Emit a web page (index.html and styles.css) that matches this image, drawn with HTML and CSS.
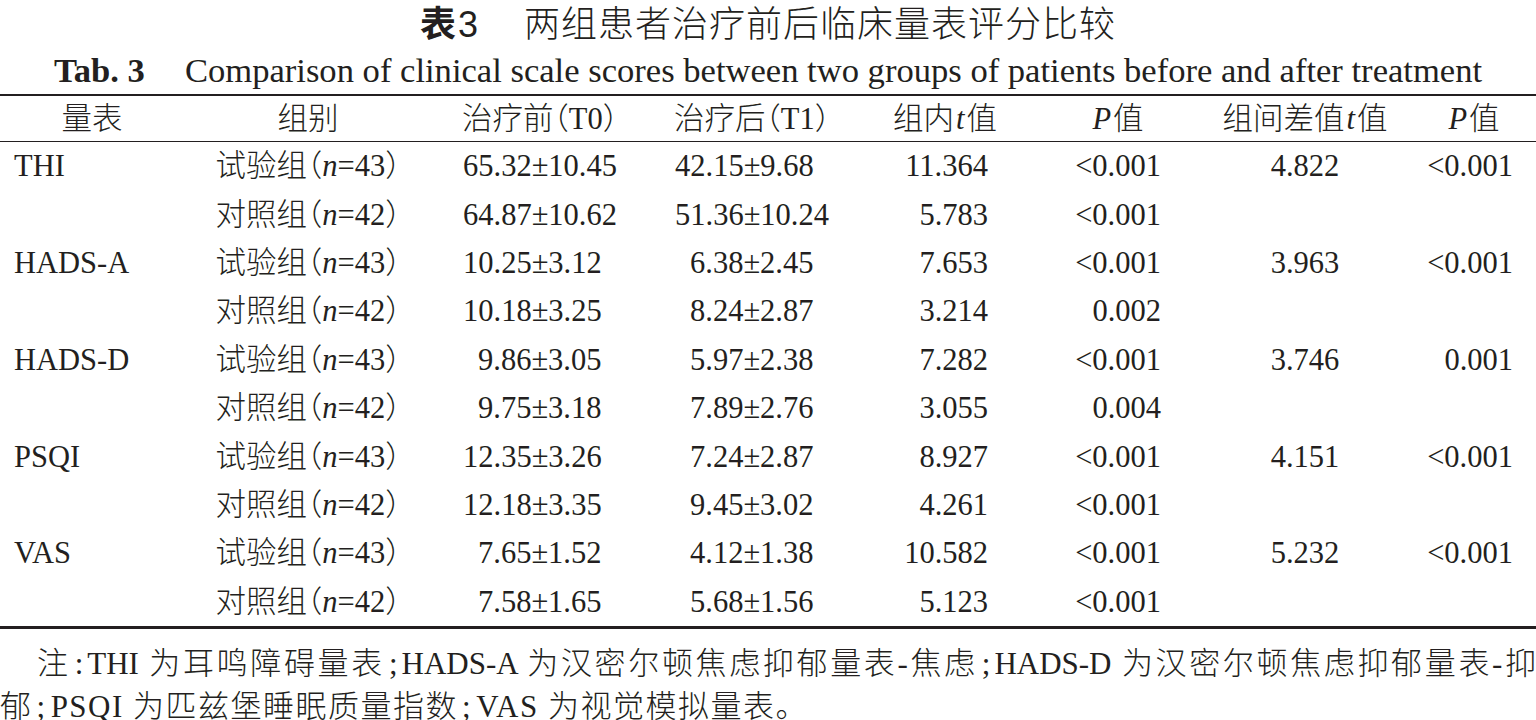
FILE: index.html
```html
<!DOCTYPE html>
<html lang="zh-CN">
<head>
<meta charset="utf-8">
<title>表3 两组患者治疗前后临床量表评分比较</title>
<link rel="stylesheet" href="styles.css">
</head>
<body>
<div class="page">
  <h1 class="cn-title"><span class="tno"><span class="tno-zh">表</span><span class="tno-num">3</span></span><span class="cn-text">两组患者治疗前后临床量表评分比较</span></h1>
  <h2 class="en-title"><b class="en-no">Tab. 3</b><span class="en-text">Comparison of clinical scale scores between two groups of patients before and after treatment</span></h2>
  <table class="data">
    <colgroup>
      <col class="w1"><col class="w2"><col class="w3"><col class="w4"><col class="w5"><col class="w6"><col class="w7"><col class="w8">
    </colgroup>
    <thead>
      <tr>
        <th>量表</th>
        <th>组别</th>
        <th>治疗前<span class="lp">（</span>T0<span class="rp">）</span></th>
        <th>治疗后<span class="lp">（</span>T1<span class="rp">）</span></th>
        <th>组内<i class="it">t</i>值</th>
        <th><i class="it">P</i>值</th>
        <th>组间差值<i class="it">t</i>值</th>
        <th><i class="it">P</i>值</th>
      </tr>
    </thead>
    <tbody>
      <tr>
        <td class="scale">THI</td>
        <td class="grp">试验组<span class="lp">（</span><i>n</i>=43<span class="rp">）</span></td>
        <td class="t0">65.32±10.45</td>
        <td class="t1">42.15±9.68</td>
        <td class="tin">11.364</td>
        <td class="p1">&lt;0.001</td>
        <td class="tb">4.822</td>
        <td class="p2">&lt;0.001</td>
      </tr>
      <tr>
        <td class="scale"></td>
        <td class="grp">对照组<span class="lp">（</span><i>n</i>=42<span class="rp">）</span></td>
        <td class="t0">64.87±10.62</td>
        <td class="t1">51.36±10.24</td>
        <td class="tin">5.783</td>
        <td class="p1">&lt;0.001</td>
        <td class="tb"></td>
        <td class="p2"></td>
      </tr>
      <tr>
        <td class="scale">HADS-A</td>
        <td class="grp">试验组<span class="lp">（</span><i>n</i>=43<span class="rp">）</span></td>
        <td class="t0">10.25±3.12</td>
        <td class="t1 d1">6.38±2.45</td>
        <td class="tin">7.653</td>
        <td class="p1">&lt;0.001</td>
        <td class="tb">3.963</td>
        <td class="p2">&lt;0.001</td>
      </tr>
      <tr>
        <td class="scale"></td>
        <td class="grp">对照组<span class="lp">（</span><i>n</i>=42<span class="rp">）</span></td>
        <td class="t0">10.18±3.25</td>
        <td class="t1 d1">8.24±2.87</td>
        <td class="tin">3.214</td>
        <td class="p1">0.002</td>
        <td class="tb"></td>
        <td class="p2"></td>
      </tr>
      <tr>
        <td class="scale">HADS-D</td>
        <td class="grp">试验组<span class="lp">（</span><i>n</i>=43<span class="rp">）</span></td>
        <td class="t0 d1">9.86±3.05</td>
        <td class="t1 d1">5.97±2.38</td>
        <td class="tin">7.282</td>
        <td class="p1">&lt;0.001</td>
        <td class="tb">3.746</td>
        <td class="p2">0.001</td>
      </tr>
      <tr>
        <td class="scale"></td>
        <td class="grp">对照组<span class="lp">（</span><i>n</i>=42<span class="rp">）</span></td>
        <td class="t0 d1">9.75±3.18</td>
        <td class="t1 d1">7.89±2.76</td>
        <td class="tin">3.055</td>
        <td class="p1">0.004</td>
        <td class="tb"></td>
        <td class="p2"></td>
      </tr>
      <tr>
        <td class="scale">PSQI</td>
        <td class="grp">试验组<span class="lp">（</span><i>n</i>=43<span class="rp">）</span></td>
        <td class="t0">12.35±3.26</td>
        <td class="t1 d1">7.24±2.87</td>
        <td class="tin">8.927</td>
        <td class="p1">&lt;0.001</td>
        <td class="tb">4.151</td>
        <td class="p2">&lt;0.001</td>
      </tr>
      <tr>
        <td class="scale"></td>
        <td class="grp">对照组<span class="lp">（</span><i>n</i>=42<span class="rp">）</span></td>
        <td class="t0">12.18±3.35</td>
        <td class="t1 d1">9.45±3.02</td>
        <td class="tin">4.261</td>
        <td class="p1">&lt;0.001</td>
        <td class="tb"></td>
        <td class="p2"></td>
      </tr>
      <tr>
        <td class="scale">VAS</td>
        <td class="grp">试验组<span class="lp">（</span><i>n</i>=43<span class="rp">）</span></td>
        <td class="t0 d1">7.65±1.52</td>
        <td class="t1 d1">4.12±1.38</td>
        <td class="tin">10.582</td>
        <td class="p1">&lt;0.001</td>
        <td class="tb">5.232</td>
        <td class="p2">&lt;0.001</td>
      </tr>
      <tr>
        <td class="scale"></td>
        <td class="grp">对照组<span class="lp">（</span><i>n</i>=42<span class="rp">）</span></td>
        <td class="t0 d1">7.58±1.65</td>
        <td class="t1 d1">5.68±1.56</td>
        <td class="tin">5.123</td>
        <td class="p1">&lt;0.001</td>
        <td class="tb"></td>
        <td class="p2"></td>
      </tr>
    </tbody>
  </table>
  <div class="note">
    <p class="nl first">注<span class="pu">:</span>THI 为耳鸣障碍量表<span class="pu">;</span>HADS-A 为汉密尔顿焦虑抑郁量表-焦虑<span class="pu">;</span>HADS-D 为汉密尔顿焦虑抑郁量表-抑</p>
    <p class="nl second">郁<span class="pu">;</span>PSQI 为匹兹堡睡眠质量指数<span class="pu">;</span>VAS 为视觉模拟量表。</p>
  </div>
</div>
</body>
</html>
```

FILE: styles.css
```css
html, body {
  margin: 0;
  padding: 0;
  background: #ffffff;
}

.page {
  width: 1536px;
  height: 720px;
  overflow: hidden;
  color: #231f20;
  font-family: "Liberation Serif", "Noto Sans CJK SC", serif;
  font-weight: 300;
}

.cn-title {
  margin: 0;
  height: 47px;
  line-height: 42px;
  text-align: center;
  font-size: 36px;
  font-weight: 300;
  white-space: nowrap;
}

.tno {
  margin-right: 46px;
}

.tno-zh {
  font-family: "Noto Sans CJK SC", sans-serif;
  font-weight: 700;
}

.tno-num {
  font-family: "Liberation Sans", sans-serif;
  font-weight: 400;
  margin-left: 2px;
}

.cn-text {
  font-family: "Noto Sans CJK SC", sans-serif;
  font-weight: 300;
  letter-spacing: 1px;
}

.en-title {
  margin: 0;
  height: 47px;
  line-height: 47px;
  text-align: center;
  font-size: 34.6px;
  font-weight: 400;
  white-space: nowrap;
}

.en-no {
  font-weight: 700;
  margin-right: 40px;
}

.data {
  width: 1536px;
  table-layout: fixed;
  border-collapse: separate;
  border-spacing: 0;
  border-top: 2.5px solid #231f20;
  border-bottom: 3px solid #231f20;
  font-size: 30.5px;
}

.w1 { width: 184px; }
.w2 { width: 248px; }
.w3 { width: 216px; }
.w4 { width: 208px; }
.w5 { width: 178px; }
.w6 { width: 166px; }
.w7 { width: 210px; }
.w8 { width: 126px; }

.data th,
.data td {
  padding: 0;
  white-space: nowrap;
  vertical-align: middle;
  line-height: 36px;
}

.data th {
  font-weight: 300;
  text-align: center;
  height: 45px;
  border-bottom: 1.5px solid #231f20;
}

.data tbody tr {
  height: 48.4px;
}

.it {
  font-style: italic;
  margin: 0 2px;
}

.lp {
  margin-left: -0.5em;
}

.rp {
  margin-right: -0.5em;
}

.scale {
  text-align: left;
  padding-left: 14px !important;
}

.grp {
  text-align: center;
}

.t0 {
  text-align: left;
  padding-left: 31px !important;
}

.t0.d1 {
  padding-left: 46px !important;
}

.t1 {
  text-align: left;
  padding-left: 27px !important;
}

.t1.d1 {
  padding-left: 42px !important;
}

.tin {
  text-align: right;
  padding-right: 46px !important;
}

.p1 {
  text-align: right;
  padding-right: 39px !important;
}

.tb {
  text-align: center;
}

.p2 {
  text-align: right;
  padding-right: 23px !important;
}

.note {
  margin-top: 13px;
  font-size: 31px;
}

.nl {
  margin: 0;
  line-height: 43px;
  white-space: nowrap;
}

.nl.first {
  text-indent: 37px;
  text-align: justify;
  text-align-last: justify;
  white-space: normal;
}

.nl.second {
  letter-spacing: 1.5px;
}

.pu {
  padding: 0 4px;
}
```
